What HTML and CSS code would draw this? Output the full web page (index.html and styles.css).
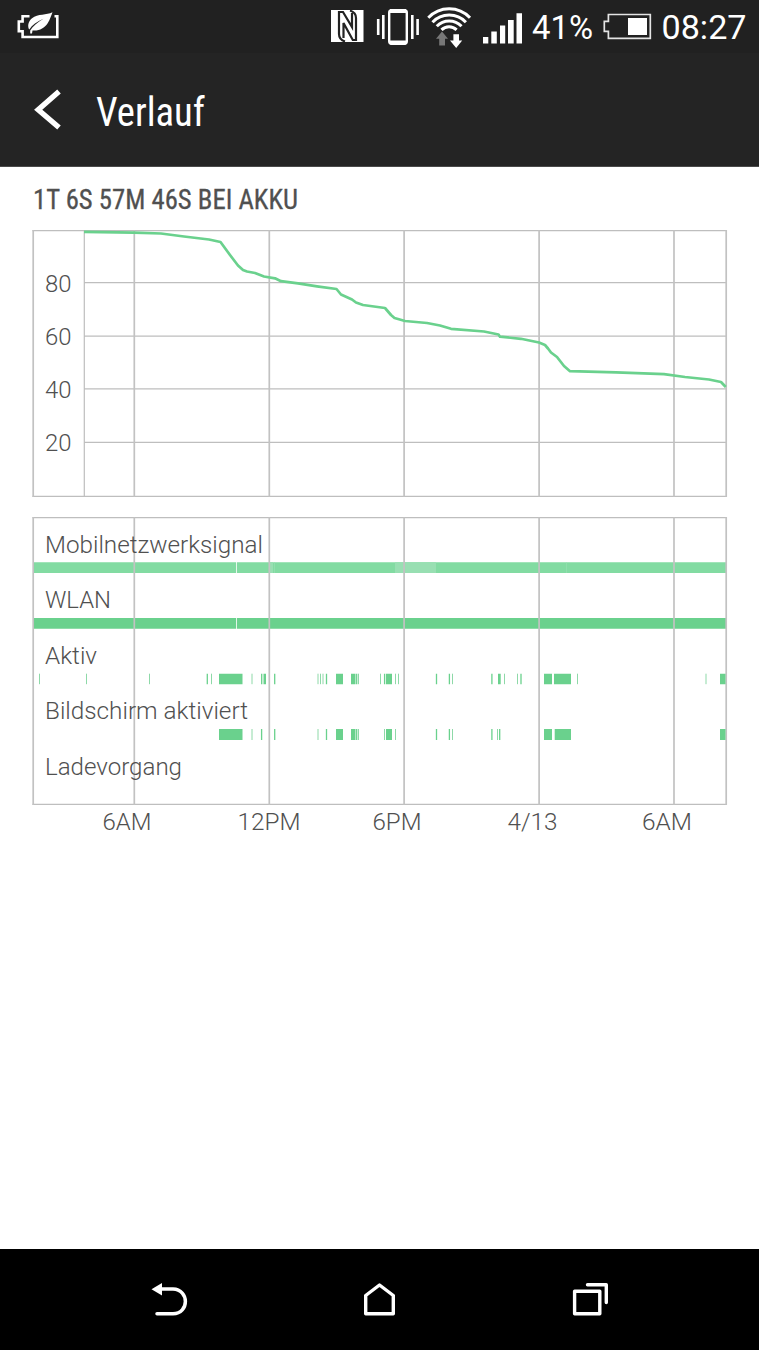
FILE: index.html
```html
<!DOCTYPE html>
<html lang="de">
<head>
<meta charset="utf-8">
<title>Verlauf</title>
<link rel="stylesheet" href="styles.css">
</head>
<body>
<div class="screen">
  <div class="status-bar">
    <svg width="48" height="53" viewBox="14 0 48 53" aria-hidden="true">
      <path d="M29.500 16.200H22.600V21.500H18.800V31.300H22.600V37H57.300V16.200H54.500" fill="none" stroke="#fff" stroke-width="2.600"/>
      <path d="M52.500 12.300C46.500 15.500 38 13.500 32 18.200C28 21.500 27.300 26.500 29.300 29.600C32 25 37 21.500 43.500 18.800C37.500 22.500 32.500 26.500 30.200 30.500V33.500H32L32.500 30.500C39 31.300 44.500 28 47.500 23.500C50.300 19.300 51 15.800 52.500 12.300Z" fill="#fff"/>
    </svg>
    <div class="status-icons">
      <svg width="210" height="53" viewBox="320 0 210 53" aria-hidden="true">
        <rect x="331" y="10" width="32.500" height="32" fill="#fff"/>
        <path d="M345 41.500C340.500 40 339 37.500 339 34V12H343L352 27V13" fill="none" stroke="#222" stroke-width="2.200"/>
        <path d="M350 10.500C354.500 12 356 14.500 356 18V40H352.800L343.500 23V38" fill="none" stroke="#222" stroke-width="2.200"/>
        <rect x="389.200" y="10.200" width="17.600" height="33.600" rx="2.500" fill="none" stroke="#fff" stroke-width="2.400"/>
        <path d="M390 11H406M390 42.500H406" stroke="#fff" stroke-width="4"/>
        <path d="M378.200 19V35M383.300 15V39M412.300 15V39M417.600 19V35" stroke="#fff" stroke-width="2.600"/>
        <path d="M428.300 17.800A28.500 28.500 0 0 1 470 17.800M432.500 22.300A23 23 0 0 1 465.900 22.300M436.800 26.300A17 17 0 0 1 461.500 26.300M441.500 29.900A10.500 10.500 0 0 1 456.600 29.900" fill="none" stroke="#fff" stroke-width="3"/>
        <path d="M442 31.500L448 38.800H445V45.500H439.200V38.800H436Z" fill="#777"/>
        <path d="M453.400 34.200H459V40.500H462.200L456.200 48L450 40.500H453.400Z" fill="#fff"/>
        <path d="M483 37H488.300V43.600H483ZM491.300 31.500H496.800V43.600H491.300ZM500 25.500H505.200V43.600H500ZM508 20H513.700V43.600H508ZM516.500 13.200H522V43.600H516.500Z" fill="#fff"/>
      </svg>
      <svg class="status-text" width="70" height="53" viewBox="530 0 70 53"><text x="532" y="39" textLength="61" lengthAdjust="spacingAndGlyphs">41%</text></svg>
      <svg width="56" height="53" viewBox="600 0 56 53" aria-hidden="true">
        <path d="M608.400 14.500H650.300V38.300H608.400V31.300H604.300V21.300H608.400Z" fill="none" stroke="#e4e4e4" stroke-width="1.700"/>
        <rect x="628" y="18" width="19" height="17" fill="#fff"/>
      </svg>
      <svg class="status-text" width="103" height="53" viewBox="656 0 103 53"><text x="661.500" y="39" textLength="85" lengthAdjust="spacingAndGlyphs">08:27</text></svg>
    </div>
  </div>
  <header class="app-bar">
    <svg width="759" height="113" viewBox="0 53 759 113">
      <path d="M59 91.500L38.200 109.700L59 127.500" fill="none" stroke="#fff" stroke-width="5.400"/>
      <text class="title" x="96" y="125.500" textLength="109" lengthAdjust="spacingAndGlyphs">Verlauf</text>
    </svg>
  </header>
  <main class="content">
    <svg class="heading" width="759" height="50" viewBox="0 167 759 50"><text x="33" y="209.300" textLength="265" lengthAdjust="spacingAndGlyphs">1T 6S 57M 46S BEI AKKU</text></svg>
    <svg width="759" height="290" viewBox="0 217 759 290">
      <g class="grid">
        <path d="M84.300 230V497M32.500 230.700H727M32.500 496.300H727M84 282.700H726M84 336.200H726M84 388.900H726M84 442.300H726"/>
        <path class="major" d="M33.200 230V497M134.300 230V497M269.300 230V497M404.100 230V497M539.100 230V497M674 230V497M726.200 230V497"/>
      </g>
      <path class="level" d="M84 231.900L134 232.600L161 233.500L184 236.500L209 239.500L220.500 242L230 255L238 265.500L243 270L247 271.500L255 273L264 276.500L275 278.300L281 281.200L298 283.300L317 286.300L336.500 289L341 294.500L352 299.500L356 302.500L363 305L385 308L391 315L394.500 318L405 321L427 323L440 325.500L451 328.800L484 331.500L498.500 334.500L500 336.700L521 338.800L539 342.500L545 345L548 348.500L551 352.500L557 357L564 366L570 371.200L616 372.300L664 374.100L685 377L709 379.500L721 382L725.800 387"/>
      <g class="label">
        <text x="45" y="291.500" textLength="26.500" lengthAdjust="spacingAndGlyphs">80</text>
        <text x="45" y="344.500" textLength="26.500" lengthAdjust="spacingAndGlyphs">60</text>
        <text x="45" y="397.500" textLength="26.500" lengthAdjust="spacingAndGlyphs">40</text>
        <text x="45" y="451" textLength="26.500" lengthAdjust="spacingAndGlyphs">20</text>
      </g>
    </svg>
    <svg width="759" height="343" viewBox="0 507 759 343">
      <path fill="#82dba2" d="M34 562.300H726V573H34Z"/>
      <path fill="#98dfb2" d="M270 562.300H273V573H270ZM274.300 562.300H275V573H274.300ZM395 562.300H436V573H395ZM566 562.300H566.600V573H566Z"/>
      <path fill="#6ad18d" d="M34 618H726V628.700H34Z"/>
      <path fill="#fff" d="M236.200 562H237V573.300H236.200ZM236.200 617.500H237V629H236.200Z"/>
      <g class="grid">
        <path d="M32.500 517.600H727M32.500 804.300H727"/>
        <path class="major" d="M33.200 517V805M134.300 517V805M269.300 517V805M404.100 517V805M539.100 517V805M674 517V805M726.200 517V805"/>
      </g>
      <!-- Aktiv -->
      <path fill="#6ad18d" d="M219 673.700h23.500v10.500h-23.500zM336 673.700h7v10.500h-7zM351 673.700h4.500v10.500h-4.500zM386 673.700h6v10.500h-6zM544 673.700h8v10.500h-8zM554 673.700h17v10.500h-17zM720 673.700h5.500v10.500h-5.500zM263.500 673.700h2.500v10.500h-2.500zM498 673.700h2.700v10.500h-2.700z"/>
      <path class="tick" d="M207.300 673.700v10.500M261.700 673.700v10.500M274.700 673.700v10.500M326.500 673.700v10.500M356.700 673.700v10.500M384.600 673.700v10.500M436.500 673.700v10.500M449.400 673.700v10.500M491.900 673.700v10.500M521 673.700v10.500"/>
      <path class="tick soft" d="M39.500 673.700v10.500M86.500 673.700v10.500M149.500 673.700v10.500M211.500 673.700v10.500M252 673.700v10.500M318 673.700v10.500M320.500 673.700v10.500M323 673.700v10.500M358.500 673.700v10.500M380.500 673.700v10.500M395.500 673.700v10.500M398.500 673.700v10.500M452.500 673.700v10.500M504.500 673.700v10.500M517.500 673.700v10.500M577.500 673.700v10.500M706 673.700v10.500"/>
      <!-- Bildschirm aktiviert -->
      <path fill="#6ad18d" d="M219 729h23.500v11h-23.500zM336 729h7v11h-7zM351 729h4.500v11h-4.500zM386 729h6v11h-6zM544 729h8v11h-8zM554.700 729h16.300v11h-16.300zM720 729h5.500v11h-5.500z"/>
      <path class="tick" d="M261.600 729v11M274.700 729v11M326.500 729v11M356.700 729v11M436.500 729v11M449.400 729v11M491.900 729v11M499.700 729v11"/>
      <path class="tick soft" d="M252 729v11M318 729v11M358.500 729v11M384.500 729v11M395.500 729v11M452.500 729v11M497.500 729v11"/>
      <g class="label">
        <text x="45" y="552.500" textLength="218" lengthAdjust="spacingAndGlyphs">Mobilnetzwerksignal</text>
        <text x="45" y="608" textLength="66" lengthAdjust="spacingAndGlyphs">WLAN</text>
        <text x="45" y="663.500" textLength="52" lengthAdjust="spacingAndGlyphs">Aktiv</text>
        <text x="45" y="719" textLength="203" lengthAdjust="spacingAndGlyphs">Bildschirm aktiviert</text>
        <text x="45" y="774.700" textLength="137" lengthAdjust="spacingAndGlyphs">Ladevorgang</text>
        <text x="102.500" y="829.500" textLength="49" lengthAdjust="spacingAndGlyphs">6AM</text>
        <text x="237.500" y="829.500" textLength="63" lengthAdjust="spacingAndGlyphs">12PM</text>
        <text x="372.500" y="829.500" textLength="49" lengthAdjust="spacingAndGlyphs">6PM</text>
        <text x="507.500" y="829.500" textLength="50" lengthAdjust="spacingAndGlyphs">4/13</text>
        <text x="642" y="829.500" textLength="50" lengthAdjust="spacingAndGlyphs">6AM</text>
      </g>
    </svg>
  </main>
  <nav class="nav-bar">
    <svg width="40" height="36" viewBox="150 1282 40 36" aria-label="Zurück">
      <path d="M161 1289H173C189.500 1289.500 189.500 1313.500 173 1313.800H157" fill="none" stroke="#fff" stroke-width="3.500" stroke-linecap="round"/>
      <path d="M151.500 1289.300L162 1283V1295.500Z" fill="#fff"/>
    </svg>
    <svg width="34" height="36" viewBox="364 1282 34 36" aria-label="Start">
      <path d="M365.700 1295.500L379.500 1285L393.300 1295.500V1313.800H365.700Z" fill="none" stroke="#fff" stroke-width="3.400" stroke-linejoin="round"/>
    </svg>
    <svg width="38" height="36" viewBox="571 1282 38 36" aria-label="Letzte Apps">
      <path d="M574.600 1291.300H599.800V1313.800H574.600ZM587.500 1284.800H606.300V1302.500" fill="none" stroke="#fff" stroke-width="3.400" stroke-linejoin="round" stroke-linecap="round"/>
    </svg>
  </nav>
</div>
</body>
</html>
```
FILE: styles.css
```css
body { margin: 0; background: #fff; }
svg { display: block; flex: none; }
.screen {
  width: 759px;
  height: 1350px;
  display: flex;
  flex-direction: column;
  overflow: hidden;
  font-family: Roboto, "Open Sans", sans-serif;
}
.status-bar {
  height: 53px;
  display: flex;
  justify-content: space-between;
  padding-left: 14px;
  box-sizing: border-box;
  background: #212121;
}
.status-icons { display: flex; }
.status-text { fill: #fff; font-size: 34px; font-weight: 400; }
.app-bar { height: 113px; background: #242424; border-bottom: 1px solid #4a4a4a; }
.title {
  fill: #fff;
  font-family: "Roboto Condensed", Roboto, sans-serif;
  font-size: 41px;
}
.content { flex: 1; background: #fff; }
.heading {
  fill: #505050;
  stroke: #505050;
  stroke-width: 0.3;
  font-family: "Roboto Condensed", Roboto, sans-serif;
  font-size: 28px;
  font-weight: 400;
}
.grid path { fill: none; stroke: #bebebe; stroke-width: 1.2; }
.grid .major { stroke: #c2c2c2; stroke-width: 1.7; }
.level { fill: none; stroke: #6ad18d; stroke-width: 2.7; stroke-linejoin: round; }
.tick { fill: none; stroke: #6ad18d; stroke-width: 1.3; }
.soft { stroke: #8ed9a8; stroke-width: 1; }
.label { fill: #505050; font-size: 24px; font-weight: 300; }
.nav-bar {
  height: 101px;
  box-sizing: border-box;
  display: flex;
  justify-content: space-between;
  align-items: center;
  padding: 1px 150px 0;
  background: #000;
}
```
